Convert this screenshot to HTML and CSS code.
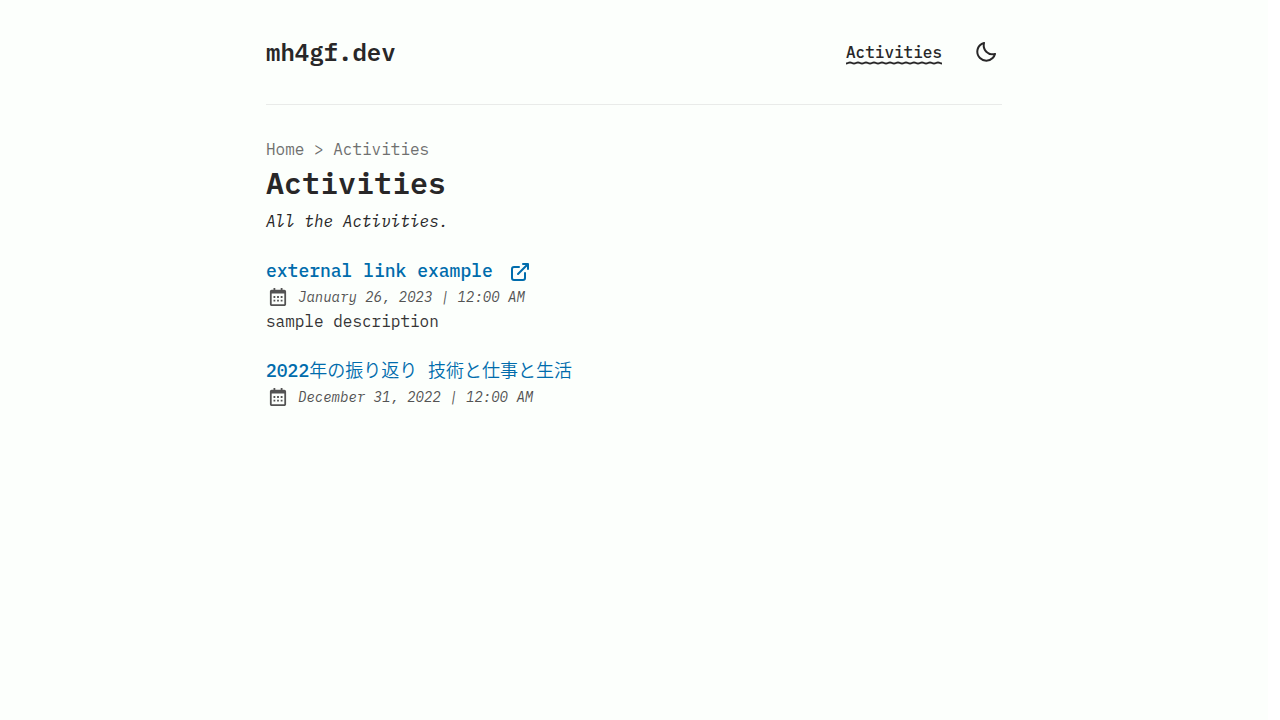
FILE: index.html
```html
<!DOCTYPE html>
<html lang="en">
<head>
<meta charset="utf-8">
<meta name="viewport" content="width=device-width, initial-scale=1">
<title>Activities | mh4gf.dev</title>
<link rel="stylesheet" href="styles.css">
</head>
<body>
<div class="page">
  <header class="site-header">
    <a class="logo" href="#">mh4gf.dev</a>
    <nav class="nav">
      <a class="nav-link" href="#">Activities
        <svg class="wave" aria-hidden="true">
          <defs><pattern id="wave" width="8" height="4" patternUnits="userSpaceOnUse"><path d="M-4 1.4C-2 1.4-2 2.6 0 2.6S2 1.4 4 1.4 6 2.6 8 2.6 10 1.4 12 1.4" fill="none" stroke="#282728" stroke-width="2"/></pattern></defs>
          <rect width="100%" height="4" fill="url(#wave)"/>
        </svg>
      </a>
      <button class="theme-button" type="button" aria-label="Toggle theme">
        <svg class="icon" viewBox="0 0 24 24"><path fill="currentColor" d="M20.742 13.045a8.088 8.088 0 0 1-2.077.271c-2.135 0-4.14-.83-5.646-2.336a8.025 8.025 0 0 1-2.064-7.723A1 1 0 0 0 9.73 2.034a10.014 10.014 0 0 0-4.489 2.582c-3.898 3.898-3.898 10.243 0 14.143a9.937 9.937 0 0 0 7.072 2.93 9.93 9.93 0 0 0 7.07-2.929 10.007 10.007 0 0 0 2.583-4.491 1.001 1.001 0 0 0-1.224-1.224zm-2.772 4.301a7.947 7.947 0 0 1-5.656 2.343 7.953 7.953 0 0 1-5.658-2.344c-3.118-3.119-3.118-8.195 0-11.314a7.923 7.923 0 0 1 2.06-1.483 10.027 10.027 0 0 0 2.89 7.848 9.972 9.972 0 0 0 7.848 2.891 8.036 8.036 0 0 1-1.484 2.059z"/></svg>
      </button>
    </nav>
  </header>
  <main class="main">
    <nav class="breadcrumb" aria-label="Breadcrumb"><a href="#">Home</a> &gt; <span>Activities</span></nav>
    <h1 class="title">Activities</h1>
    <p class="lead">All the Activities.</p>
    <ul class="list">
      <li class="item">
        <a class="item-link" href="#"><h2 class="item-title">external link example</h2>
          <svg class="icon" viewBox="0 0 24 24" fill="none" stroke="currentColor" stroke-width="2" stroke-linecap="round" stroke-linejoin="round"><path d="M11 7H6a2 2 0 0 0-2 2v9a2 2 0 0 0 2 2h9a2 2 0 0 0 2-2v-5M10 14 20 4M15 4h5v5"/></svg>
        </a>
        <div class="date">
          <svg class="icon calendar" viewBox="0 0 24 24" fill="currentColor"><path d="M7 11h2v2H7zm0 4h2v2H7zm4-4h2v2h-2zm0 4h2v2h-2zm4-4h2v2h-2zm0 4h2v2h-2z"/><path d="M5 22h14c1.103 0 2-.897 2-2V6c0-1.103-.897-2-2-2h-2V2h-2v2H9V2H7v2H5c-1.103 0-2 .897-2 2v14c0 1.103.897 2 2 2zM19 8l.001 12H5V8h14z"/></svg>
          <time datetime="2023-01-26T00:00">January 26, 2023 | 12:00 AM</time>
        </div>
        <p class="description">sample description</p>
      </li>
      <li class="item">
        <a class="item-link" href="#"><h2 class="item-title">2022<span class="jp" lang="ja">年の振り返り</span> <span class="jp" lang="ja">技術と仕事と生活</span></h2></a>
        <div class="date">
          <svg class="icon calendar" viewBox="0 0 24 24" fill="currentColor"><path d="M7 11h2v2H7zm0 4h2v2H7zm4-4h2v2h-2zm0 4h2v2h-2zm4-4h2v2h-2zm0 4h2v2h-2z"/><path d="M5 22h14c1.103 0 2-.897 2-2V6c0-1.103-.897-2-2-2h-2V2h-2v2H9V2H7v2H5c-1.103 0-2 .897-2 2v14c0 1.103.897 2 2 2zM19 8l.001 12H5V8h14z"/></svg>
          <time datetime="2022-12-31T00:00">December 31, 2022 | 12:00 AM</time>
        </div>
      </li>
    </ul>
  </main>
</div>
</body>
</html>
```
FILE: styles.css
```css
* { box-sizing: border-box; margin: 0; padding: 0; }
html { background: #fff; }
body {
  padding-right: 12px;
  color: #282728;
  font-family: "IBM Plex Mono", "Liberation Mono", "Noto Sans CJK JP", monospace;
  font-size: 16px;
  line-height: 24px;
}
a { color: inherit; text-decoration: none; }
ul { list-style: none; }
.page { min-height: 100vh; padding: 0 16px; background: #fcfffc; }
.site-header, .main { max-width: 736px; margin: 0 auto; }
.site-header {
  display: flex;
  align-items: center;
  justify-content: space-between;
  padding: 32px 0;
  border-bottom: 1px solid #e9ebe9;
}
.logo { font-size: 24px; font-weight: 600; line-height: 32px; }
.nav { display: flex; align-items: center; gap: 28px; }
.nav-link { position: relative; font-weight: 500; }
.wave { position: absolute; left: 0; bottom: -1px; width: 100%; height: 4px; }
.theme-button { display: flex; padding: 8px 4px; border: 0; background: none; color: inherit; }
.icon { display: block; flex: none; width: 24px; height: 24px; }
.main { padding: 32px 0 16px; }
.breadcrumb { color: #6f706f; }
.title { font-size: 30px; font-weight: 600; line-height: 36px; margin-top: 4px; }
.lead { margin: 8px 0 24px; font-style: italic; }
.list { display: grid; gap: 24px; }
.item-link { display: inline-flex; gap: 15px; color: #006cac; vertical-align: top; }
.item-title { font-size: 18px; font-weight: 500; line-height: 28px; }
.item-link .icon { margin-top: 3px; }
.jp { font-family: "Noto Sans CJK JP", sans-serif; font-weight: 350; line-height: 20px; }
.date { display: flex; align-items: center; gap: 8px; color: #535353; font-size: 14px; font-style: italic; }
.calendar { transform: scale(0.9); }
.description { color: #353435; }
```
